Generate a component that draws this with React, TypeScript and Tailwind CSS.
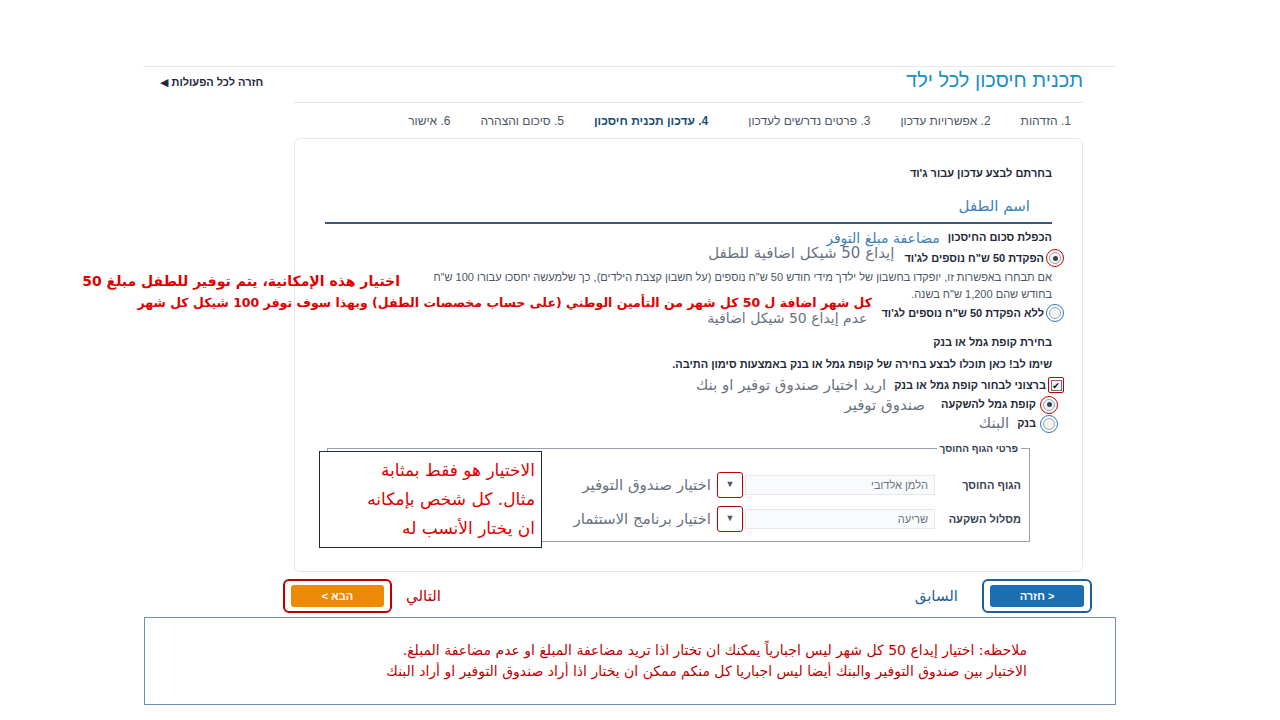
import React from "react";

const F = { fontFamily: '"Liberation Sans", "DejaVu Sans", Arial, sans-serif' };
const AR = { fontFamily: '"DejaVu Sans", "Liberation Sans", sans-serif' };

function Radio({ on, ring }: { on?: boolean; ring: string }) {
  return (
    <span className={`inline-flex items-center justify-center w-[18px] h-[18px] rounded-full border ${ring}`}>
      <span className="w-[12px] h-[12px] rounded-full border border-gray-400 bg-gray-100 flex items-center justify-center">
        {on && <span className="w-[5px] h-[5px] rounded-full bg-gray-700" />}
      </span>
    </span>
  );
}

function SelectRow({ label, value, ar }: { label: string; value: string; ar: string }) {
  return (
    <div className="flex items-center h-[26px]">
      <div className="w-[90px] text-[11px] font-bold text-gray-700 pr-[4px]">{label}</div>
      <div className="w-[190px] h-[20px] border border-gray-200 bg-gray-50 text-[11px] text-gray-500 flex items-center px-[6px]">{value}</div>
      <div className="w-[26px] h-[26px] border border-[#c00000] rounded-[3px] flex items-center justify-center text-[9px] text-gray-600 mr-[2px]">▼</div>
      <div className="text-[15px] leading-none text-gray-500 mr-[6px] whitespace-nowrap" style={AR}>{ar}</div>
    </div>
  );
}

export default function App() {
  return (
    <div dir="rtl" className="relative w-[1280px] h-[720px] bg-white overflow-hidden" style={F}>
      <div className="absolute left-[143px] top-[66px] w-[973px] border-t border-gray-200" />
      <div className="mr-[197px] ml-[160px] pt-[68px] h-[92px] flex items-start justify-between">
        <div className="text-[20px] leading-[24px] text-[#1a8fc7]">תכנית חיסכון לכל ילד</div>
        <div className="text-[11px] font-bold text-gray-800 mt-[6px]">חזרה לכל הפעולות ◀</div>
      </div>
      <div className="mr-[197px] ml-[294px] mt-[10px] border-t border-gray-200" />
      <div className="mr-[197px] ml-[294px] h-[35px] flex items-center gap-[30px] pr-[12px] text-[12px] text-gray-600">
        <span>1. הזדהות</span>
        <span>2. אפשרויות עדכון</span>
        <span>3. פרטים נדרשים לעדכון</span>
        <span className="font-bold text-[#1b4f7a] mr-[10px]">4. עדכון תכנית חיסכון</span>
        <span>5. סיכום והצהרה</span>
        <span>6. אישור</span>
      </div>
      <div className="mr-[197px] ml-[294px] h-[434px] border border-gray-200 rounded-[6px] pr-[30px] pl-[30px] pt-[27px]">
        <div className="text-[11px] leading-[14px] font-bold text-gray-800">בחרתם לבצע עדכון עבור ג'וד</div>
        <div className="mt-[16px] pr-[22px] text-[15px] leading-[20px] text-[#3c7fb8]" style={AR}>اسم الطفل</div>
        <div className="mt-[6px] border-t-2 border-[#3b5a7a]" />
        <div className="mt-[3px] h-[18px] flex items-end gap-[8px]">
          <span className="text-[11px] font-bold text-gray-800">הכפלת סכום החיסכון</span>
          <span className="text-[14px] leading-none text-[#3c7fb8]" style={AR}>مضاعفة مبلغ التوفر</span>
        </div>
        <div className="mt-[2px] h-[22px] flex items-center gap-[2px] -mr-[12px]">
          <Radio on ring="border-[#c00000]" />
          <span className="text-[11px] font-bold text-gray-800">הפקדת 50 ש"ח נוספים לג'וד</span>
          <span className="text-[15px] leading-none text-gray-500 mr-[8px] -mt-[10px]" style={AR}>إيداع 50 شيكل اضافية للطفل</span>
        </div>
        <div className="text-[11px] text-gray-600 leading-[17px]">
          <div>אם תבחרו באפשרות זו, יופקדו בחשבון של ילדך מידי חודש 50 ש"ח נוספים (על חשבון קצבת הילדים), כך שלמעשה יחסכו עבורו 100 ש"ח</div>
          <div>בחודש שהם 1,200 ש"ח בשנה.</div>
        </div>
        <div className="h-[20px] flex items-center gap-[2px] -mr-[12px]">
          <Radio ring="border-[#2e75b6]" />
          <span className="text-[11px] font-bold text-gray-800">ללא הפקדת 50 ש"ח נוספים לג'וד</span>
          <span className="text-[14px] leading-none text-gray-500 mr-[12px] mt-[10px]" style={AR}>عدم إيداع 50 شيكل اضافية</span>
        </div>
        <div className="mt-[12px] text-[11px] leading-[14px] font-bold text-gray-800">בחירת קופת גמל או בנק</div>
        <div className="mt-[8px] text-[11px] leading-[14px] font-bold text-gray-800">שימו לב! כאן תוכלו לבצע בחירה של קופת גמל או בנק באמצעות סימון התיבה.</div>
        <div className="mt-[4px] h-[20px] flex items-center gap-[2px] -mr-[12px]">
          <span className="w-[16px] h-[16px] border border-[#c00000] rounded-[2px] flex items-center justify-center">
            <span className="w-[11px] h-[11px] border border-gray-500 bg-gray-100 text-[9px] leading-[10px] text-center">✔</span>
          </span>
          <span className="text-[11px] font-bold text-gray-800">ברצוני לבחור קופת גמל או בנק</span>
          <span className="text-[15px] leading-none text-gray-500 mr-[6px]" style={AR}>اريد اختيار صندوق توفير او بنك</span>
        </div>
        <div className="h-[19px] flex items-center gap-[4px] -mr-[6px]">
          <Radio on ring="border-[#c00000]" />
          <span className="text-[11px] font-bold text-gray-800">קופת גמל להשקעה</span>
          <span className="text-[15px] leading-none text-gray-500 mr-[12px] mt-[2px]" style={AR}>صندوق توفير</span>
        </div>
        <div className="h-[19px] flex items-center gap-[4px] -mr-[6px]">
          <Radio ring="border-[#2e75b6]" />
          <span className="text-[11px] font-bold text-gray-800">בנק</span>
          <span className="text-[15px] leading-none text-gray-500 mr-[4px]" style={AR}>البنك</span>
        </div>
        <div className="relative mt-[15px] mr-[22px] ml-[2px] h-[94px] border border-gray-400 pt-[23px] pr-[4px]">
          <div className="absolute -top-[8px] right-[8px] bg-white px-[3px] text-[10px] font-bold text-gray-700">פרטי הגוף החוסך</div>
          <SelectRow label="הגוף החוסך" value="הלמן אלדובי" ar="اختيار صندوق التوفير" />
          <div className="h-[8px]" />
          <SelectRow label="מסלול השקעה" value="שריעה" ar="اختيار برنامج الاستثمار" />
        </div>
      </div>
      <div className="mr-[188px] ml-[283px] mt-[7px] flex items-center justify-between">
        <div className="flex items-center gap-[24px]">
          <div className="w-[110px] h-[34px] border-2 border-[#1f5f95] rounded-[6px] flex items-center justify-center">
            <div className="w-[94px] h-[22px] rounded-[3px] bg-[#1b6fb0] text-white text-[11px] font-bold flex items-center justify-center">&lt; חזרה</div>
          </div>
          <span className="text-[15px] text-[#1f5f95]" style={AR}>السابق</span>
        </div>
        <div className="flex items-center gap-[14px]">
          <span className="text-[15px] text-[#c00000]" style={AR}>التالي</span>
          <div className="w-[109px] h-[34px] border-2 border-[#c00000] rounded-[6px] flex items-center justify-center">
            <div className="w-[93px] h-[22px] rounded-[3px] bg-[#ec8a05] text-white text-[11px] font-bold flex items-center justify-center">הבא &gt;</div>
          </div>
        </div>
      </div>
      <div className="mr-[164px] ml-[144px] mt-[4px] h-[88px] border border-[#6f8fb0] pr-[88px] pt-[22px] text-[14px] text-[#c00000] leading-[21px]" style={AR}>
        <div>ملاحظه: اختيار إيداع 50 كل شهر ليس اجبارياً يمكنك ان تختار اذا تريد مضاعفة المبلغ او عدم مضاعفة المبلغ.</div>
        <div>الاختيار بين صندوق التوفير والبنك أيضا ليس اجباريا كل منكم ممكن ان يختار اذا أراد صندوق التوفير او أراد البنك</div>
      </div>

      <div className="absolute left-[100px] top-[272px] w-[300px] text-right text-[14px] leading-[18px] font-bold text-[#e00000] whitespace-nowrap" style={AR}>اختيار هذه الإمكانية، يتم توفير للطفل مبلغ 50</div>
      <div className="absolute left-[150px] top-[294px] w-[722px] text-right text-[12.5px] leading-[18px] font-bold text-[#e00000] whitespace-nowrap" style={AR}>كل شهر اضافة ل 50 كل شهر من التأمين الوطني (على حساب مخصصات الطفل) وبهذا سوف توفر 100 شيكل كل شهر</div>
      <div className="absolute left-[319px] top-[451px] w-[223px] h-[97px] border border-gray-800 bg-white pr-[6px] pt-[4px] text-[17px] leading-[29px] font-medium text-[#e00000] text-right" style={AR}>
        <div>الاختيار هو فقط بمثابة</div>
        <div>مثال. كل شخص بإمكانه</div>
        <div>ان يختار الأنسب له</div>
      </div>
    </div>
  );
}
